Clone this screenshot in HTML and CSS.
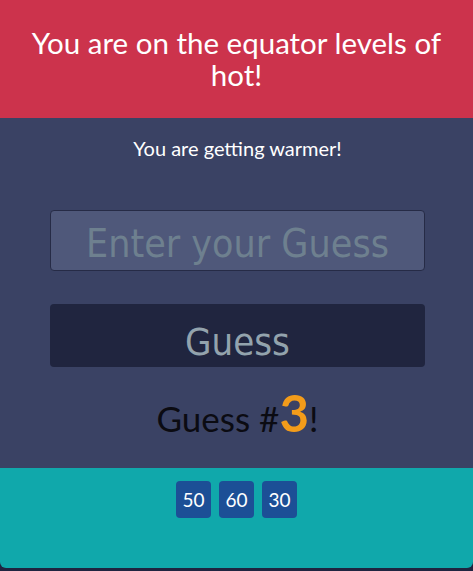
FILE: index.html
```html
<!DOCTYPE html>
<html>
<head>
<meta charset="utf-8">
<link rel="stylesheet" href="styles.css">
</head>
<body>
<div class="app">
  <header class="top">
    <h1 class="title">You are on the equator levels of hot!</h1>
  </header>
  <main class="game">
    <p class="hint">You are getting warmer!</p>
    <input class="guess-input" type="text" placeholder="Enter your Guess">
    <button class="guess-btn">Guess</button>
    <p class="count">Guess #<span class="num">3</span>!</p>
  </main>
  <footer class="history">
    <span class="chip">50</span>
    <span class="chip">60</span>
    <span class="chip">30</span>
  </footer>
</div>
</body>
</html>
```
FILE: styles.css
```css
html, body {
  margin: 0;
  padding: 0;
  background: #1f2440;
}
.app {
  width: 473px;
  height: 568px;
  display: flex;
  flex-direction: column;
  font-family: Lato, "Liberation Sans", sans-serif;
}
.top {
  height: 118px;
  background: #cc334c;
  display: flex;
  align-items: center;
  justify-content: center;
  padding: 0 20px;
  box-sizing: border-box;
}
.title {
  margin: 0;
  color: #fff;
  font-weight: 400;
  font-size: 29.5px;
  line-height: 32px;
  text-align: center;
}
.game {
  height: 350px;
  background: #3a4264;
  display: flex;
  flex-direction: column;
  align-items: center;
  padding-left: 2px;
  box-sizing: border-box;
}
.hint {
  margin: 18px 0 0;
  color: #fff;
  font-size: 20px;
  line-height: 24px;
}
.guess-input {
  margin-top: 50px;
  width: 375px;
  height: 61px;
  box-sizing: border-box;
  background: #4f587a;
  border: 1px solid #262b46;
  border-radius: 4px;
  font-family: "DejaVu Sans Condensed", "DejaVu Sans", sans-serif;
  font-size: 39px;
  color: #fff;
  text-align: center;
  outline: none;
  padding: 6px 0 0;
}
.guess-input::placeholder {
  color: #6e808f;
}
.guess-btn {
  margin-top: 33px;
  width: 375px;
  height: 63px;
  background: #20253f;
  border: none;
  border-radius: 4px;
  font-family: "DejaVu Sans Condensed", "DejaVu Sans", sans-serif;
  font-size: 38px;
  color: #93a3ad;
  padding: 12px 0 0;
}
.count {
  margin: 21px 0 0;
  font-size: 35px;
  line-height: 50px;
  color: #0b0b12;
}
.num {
  color: #f39c1a;
  font-weight: 700;
  font-size: 51px;
  line-height: 50px;
}
.history {
  height: 100px;
  background: #10a8ab;
  border-radius: 0 0 6px 6px;
  display: flex;
  justify-content: center;
  align-items: flex-start;
  gap: 8px;
  padding-top: 13px;
  box-sizing: border-box;
}
.chip {
  background: #1c4f96;
  color: #fff;
  font-size: 19px;
  width: 35px;
  height: 37px;
  border-radius: 4px;
  display: flex;
  align-items: center;
  justify-content: center;
}
```
